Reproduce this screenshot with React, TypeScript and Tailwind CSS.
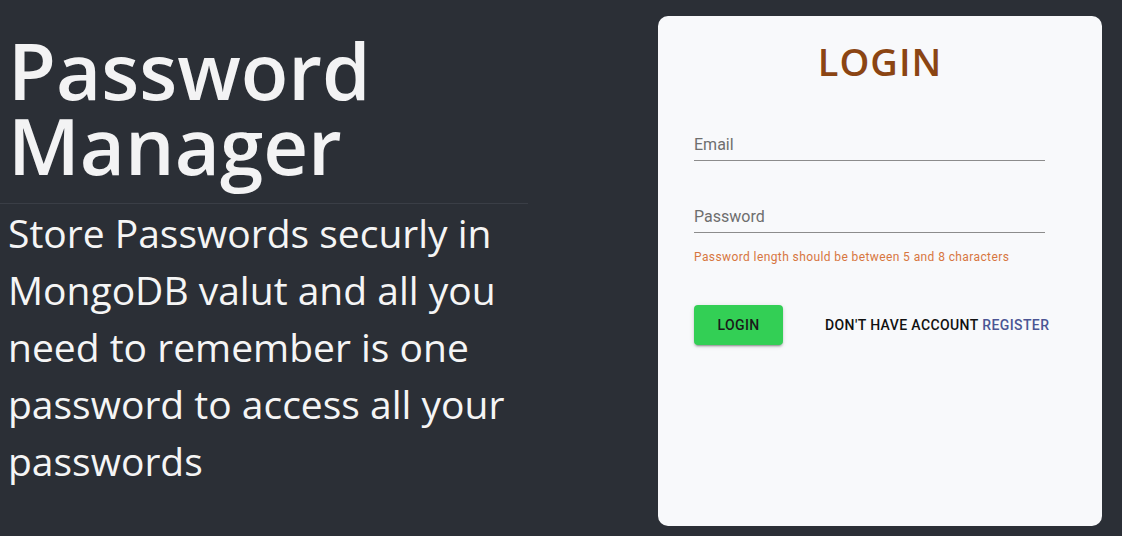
export default function App() {
  return (
    <div className="flex min-h-screen bg-[#2b2f36]">
      <div className="w-[528px] pt-[33px]">
        <h1 className="pl-[8px] font-['Open_Sans',sans-serif] text-[78px] font-semibold leading-[75px] text-[#f3f3f4]">
          Password
          <br />
          Manager
        </h1>
        <div className="mt-[20px] h-px bg-[#3a3e46]" />
        <p className="pl-[8px] font-['Open_Sans',sans-serif] text-[39px] leading-[57px] text-[#f5f5f5]">
          Store Passwords securly in MongoDB valut and all you need to remember is one password to access all your
          passwords
        </p>
      </div>

      <div className="ml-auto mr-[20px] mt-[16px] h-[510px] w-[444px] rounded-[10px] bg-[#f8f9fb] pt-[23px]">
        <h2 className="text-center font-['Open_Sans',sans-serif] text-[38px] font-semibold leading-[44px] tracking-[1px] text-[#8b4513]">
          LOGIN
        </h2>

        <div className="ml-[36px] w-[351px] font-['Roboto',sans-serif]">
          <div className="mt-[50px] border-b border-[#8c8c8c] pb-[4px] text-[16px] leading-[23px] text-[#6e6e6e]">
            Email
          </div>
          <div className="mt-[44px] border-b border-[#8c8c8c] pb-[4px] text-[16px] leading-[23px] text-[#6e6e6e]">
            Password
          </div>
          <div className="mt-[14px] text-[12px] leading-[20px] tracking-[0.4px] text-[#d7763f]">
            Password length should be between 5 and 8 characters
          </div>

          <div className="mt-[38px] flex items-center">
            <button className="h-[40px] w-[89px] shrink-0 rounded-[4px] bg-[#33cf55] text-[14px] font-medium tracking-[0.4px] text-[#1a1a1a] shadow-[0_3px_1px_-2px_rgba(0,0,0,0.2),0_2px_2px_0_rgba(0,0,0,0.14),0_1px_5px_0_rgba(0,0,0,0.12)]">
              LOGIN
            </button>
            <div className="ml-[42px] whitespace-nowrap text-[14px] font-medium tracking-[0.4px] text-[#111]">
              DON'T HAVE ACCOUNT <span className="text-[#4b5594]">REGISTER</span>
            </div>
          </div>
        </div>
      </div>
    </div>
  );
}
